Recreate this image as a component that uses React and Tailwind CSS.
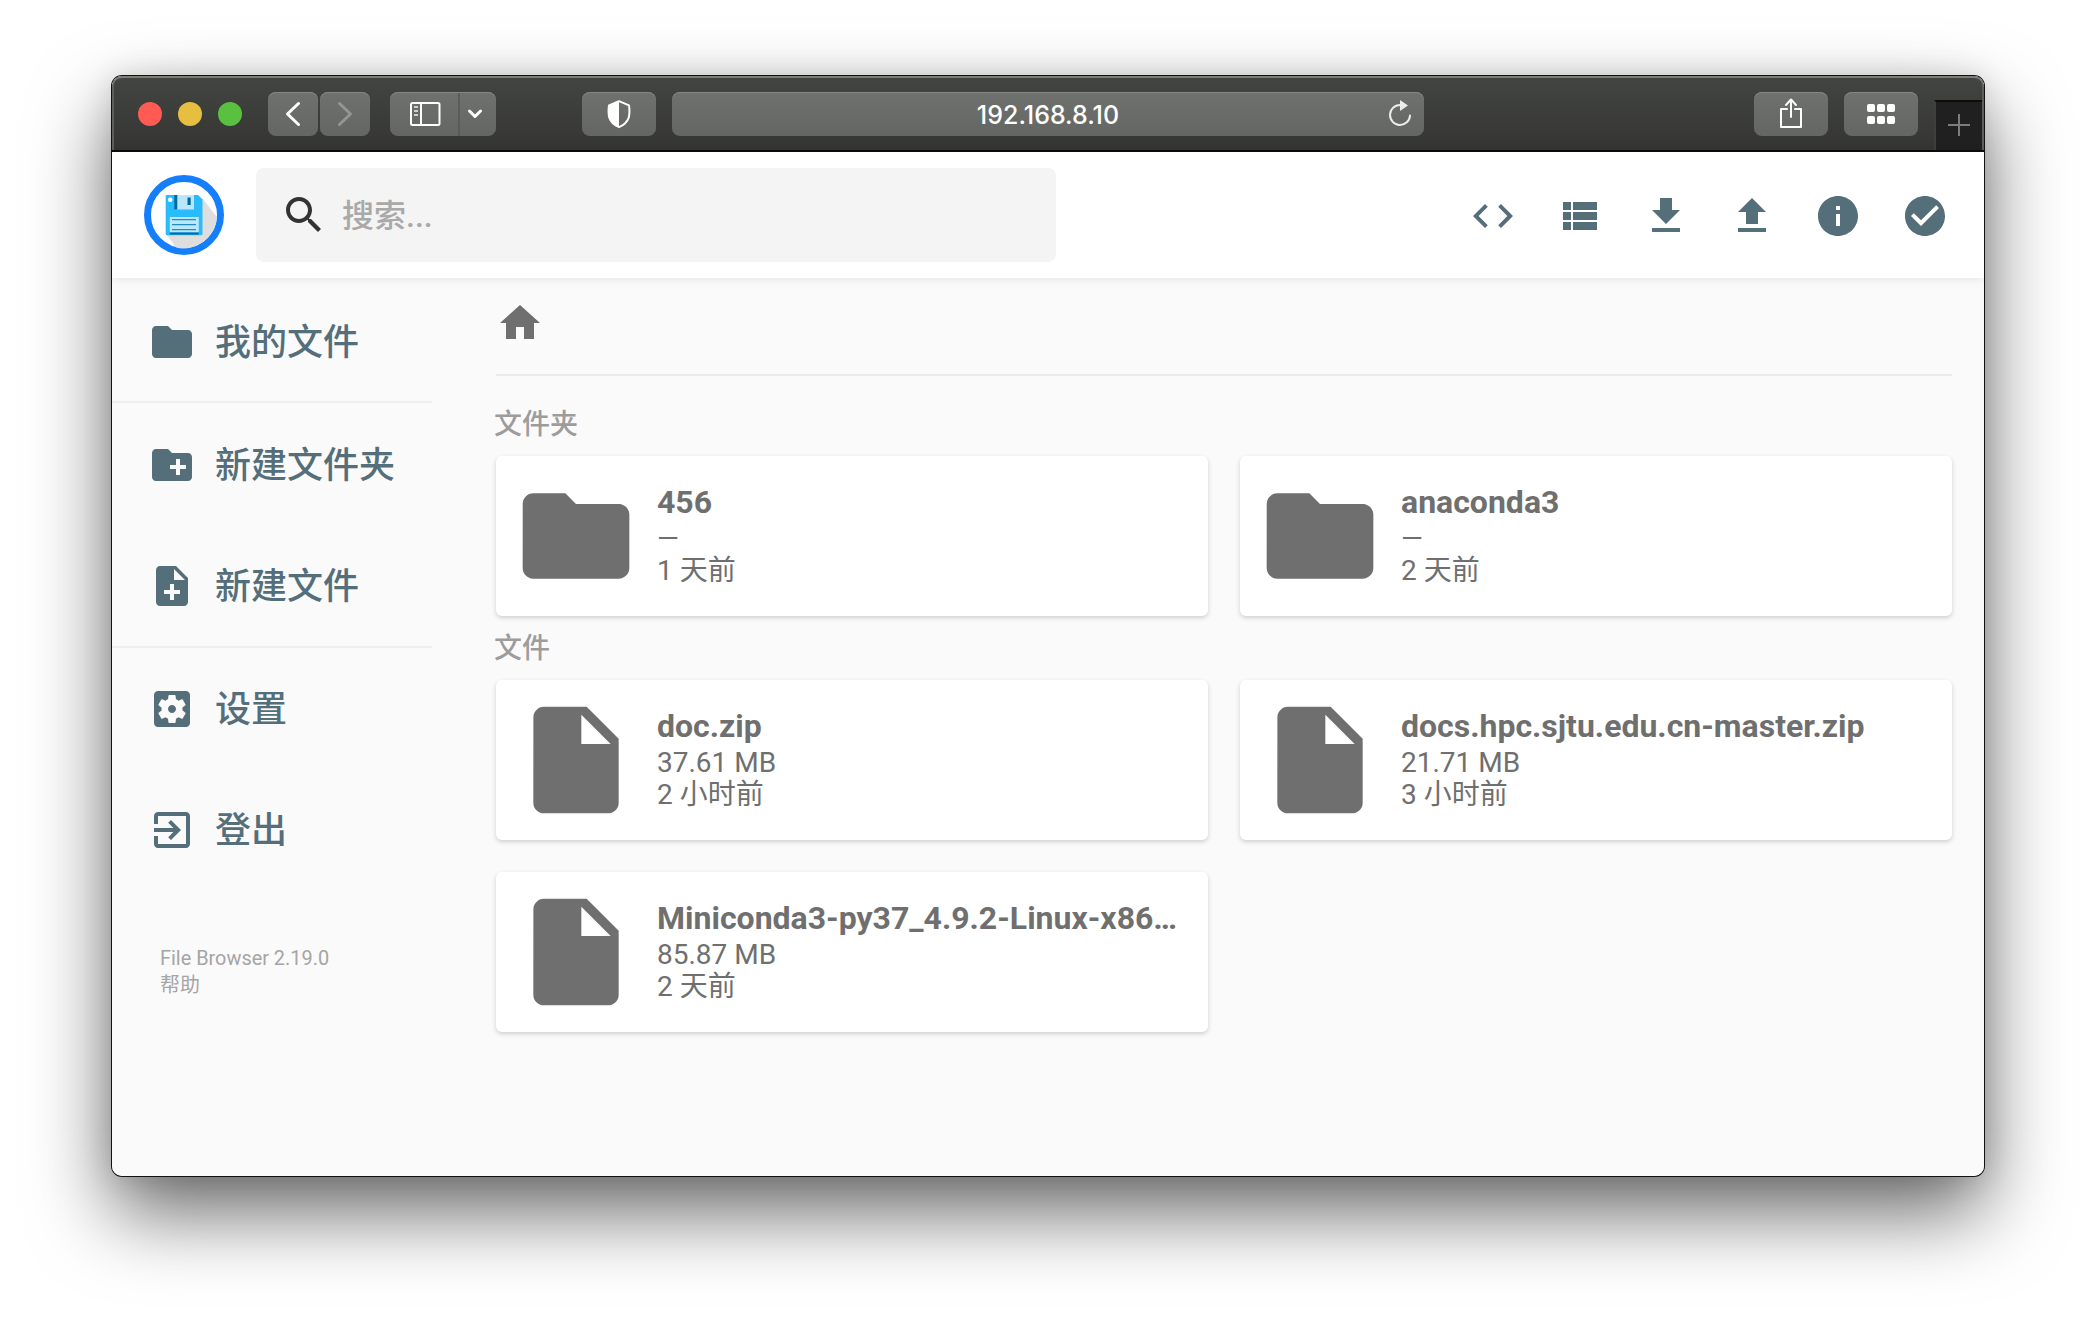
import React from "react";

const MD = {
  code: "M9.4 16.6L4.8 12l4.6-4.6L8 6l-6 6 6 6 1.4-1.4zm5.2 0l4.6-4.6-4.6-4.6L16 6l6 6-6 6-1.4-1.4z",
  list: "M4 14h4v-4H4v4zm0 5h4v-4H4v4zM4 9h4V5H4v4zm5 5h12v-4H9v4zm0 5h12v-4H9v4zM9 5v4h12V5H9z",
  download: "M19 9h-4V3H9v6H5l7 7 7-7zM5 18v2h14v-2H5z",
  upload: "M9 16h6v-6h4l-7-7-7 7h4zm-4 2h14v2H5z",
  info: "M12 2C6.48 2 2 6.48 2 12s4.48 10 10 10 10-4.48 10-10S17.52 2 12 2zm1 15h-2v-6h2v6zm0-8h-2V7h2v2z",
  check: "M12 2C6.48 2 2 6.48 2 12s4.48 10 10 10 10-4.48 10-10S17.52 2 12 2zm-2 15l-5-5 1.41-1.41L10 14.17l7.59-7.59L19 8l-9 9z",
  search: "M15.5 14h-.79l-.28-.27C15.41 12.59 16 11.11 16 9.5 16 5.91 13.09 3 9.5 3S3 5.91 3 9.5 5.91 16 9.5 16c1.61 0 3.09-.59 4.23-1.57l.27.28v.79l5 4.99L20.49 19l-4.99-5zm-6 0C7.01 14 5 11.99 5 9.5S7.01 5 9.5 5 14 7.01 14 9.5 11.99 14 9.5 14z",
  folder: "M10 4H4c-1.1 0-1.99.9-1.99 2L2 18c0 1.1.9 2 2 2h16c1.1 0 2-.9 2-2V8c0-1.1-.9-2-2-2h-8l-2-2z",
  newFolder: "M20 6h-8l-2-2H4c-1.11 0-1.99.89-1.99 2L2 18c0 1.11.89 2 2 2h16c1.11 0 2-.89 2-2V8c0-1.11-.89-2-2-2zm-1 8h-3v3h-2v-3h-3v-2h3V9h2v3h3v2z",
  newFile: "M14 2H6c-1.1 0-1.99.9-1.99 2L4 20c0 1.1.89 2 1.99 2H18c1.1 0 2-.9 2-2V8l-6-6zm2 14h-3v3h-2v-3H8v-2h3v-3h2v3h3v2zm-3-7V3.5L18.5 9H13z",
  settings: "M12 10c-1.1 0-2 .9-2 2s.9 2 2 2 2-.9 2-2-.9-2-2-2zm7-7H5c-1.11 0-2 .9-2 2v14c0 1.1.89 2 2 2h14c1.11 0 2-.9 2-2V5c0-1.1-.89-2-2-2zm-1.75 9c0 .23-.02.46-.05.68l1.48 1.16c.13.11.17.3.08.45l-1.4 2.42c-.09.15-.27.21-.43.15l-1.74-.7c-.36.28-.76.51-1.18.69l-.26 1.85c-.03.17-.18.3-.35.3h-2.8c-.17 0-.32-.13-.35-.29l-.26-1.85c-.43-.18-.82-.41-1.18-.69l-1.74.7c-.16.06-.34 0-.43-.15l-1.4-2.42c-.09-.15-.05-.34.08-.45l1.48-1.16c-.03-.23-.05-.46-.05-.69 0-.23.02-.46.05-.68l-1.48-1.16c-.13-.11-.17-.3-.08-.45l1.4-2.42c.09-.15.27-.21.43-.15l1.74.7c.36-.28.76-.51 1.18-.69l.26-1.85c.03-.17.18-.3.35-.3h2.8c.17 0 .32.13.35.29l.26 1.85c.43.18.82.41 1.18.69l1.74-.7c.16-.06.34 0 .43.15l1.4 2.42c.09.15.05.34-.08.45l-1.48 1.16c.03.23.05.46.05.69z",
  exit: "M10.09 15.59L11.5 17l5-5-5-5-1.41 1.41L12.67 11H3v2h9.67l-2.58 2.59zM19 3H5c-1.11 0-2 .9-2 2v4h2V5h14v14H5v-4H3v4c0 1.1.89 2 2 2h14c1.1 0 2-.9 2-2V5c0-1.1-.9-2-2-2z",
  home: "M10 20v-6h4v6h5v-8h3L12 3 2 12h3v8z",
  file: "M6 2c-1.1 0-1.99.9-1.99 2L4 20c0 1.1.89 2 1.99 2H18c1.1 0 2-.9 2-2V8l-6-6H6zm7 7V3.5L18.5 9H13z",
};

function Icon({ name, className = "size-12" }) {
  return (
    <svg viewBox="0 0 24 24" fill="currentColor" className={`shrink-0 ${className}`}>
      <path d={MD[name]} />
    </svg>
  );
}

function ToolButton({ className = "", children }) {
  return (
    <div className={`flex h-11 shrink-0 items-center justify-center rounded-[8px] bg-linear-to-b from-[#6f716e] to-[#646663] text-white shadow-[inset_0_1px_0_#858784] ${className}`}>
      {children}
    </div>
  );
}

function TitleBar() {
  return (
    <div className="flex h-[76px] items-start rounded-t-[10px] border-b-2 border-[#0c0c0c] bg-linear-to-b from-[#434541] to-[#353633] pt-4 shadow-[inset_0_2px_0_#7b7d7a,inset_2px_0_0_#5d5f5c,inset_-2px_0_0_#5d5f5c]">
      <div className="ml-[26px] flex h-11 gap-4 pt-[10px]">
        <span className="size-6 rounded-full bg-[#ff5b54]" />
        <span className="size-6 rounded-full bg-[#e6bf40]" />
        <span className="size-6 rounded-full bg-[#5ac140]" />
      </div>
      <ToolButton className="ml-[26px] w-[50px]">
        <svg viewBox="0 0 50 44" className="h-11 w-[50px]" fill="none" stroke="currentColor" strokeWidth="3" strokeLinecap="round" strokeLinejoin="round">
          <path d="M30.500 11.500L19.500 22l11 10.500" />
        </svg>
      </ToolButton>
      <ToolButton className="ml-[2px] w-[50px]">
        <svg viewBox="0 0 50 44" className="h-11 w-[50px]" fill="none" stroke="#949693" strokeWidth="3" strokeLinecap="round" strokeLinejoin="round">
          <path d="M19.500 11.500L30.500 22l-11 10.500" />
        </svg>
      </ToolButton>
      <ToolButton className="ml-5 w-[106px]">
        <svg viewBox="0 0 106 44" className="h-11 w-[106px]" fill="none" stroke="currentColor">
          <rect x="21" y="11" width="28.500" height="22" rx="1.500" strokeWidth="2" />
          <path d="M31 11v22" strokeWidth="2" />
          <path d="M24 15h4M24 19h4M24 23h4" strokeWidth="1.800" stroke="#cfd0ce" />
          <path d="M69 1v43" stroke="#555754" strokeWidth="1.500" />
          <path d="M79.500 19l5.500 5.500 5.500-5.500" strokeWidth="3" strokeLinecap="round" strokeLinejoin="round" />
        </svg>
      </ToolButton>
      <ToolButton className="ml-[86px] w-[74px]">
        <svg viewBox="0 0 74 44" className="h-11 w-[74px]">
          <path d="M37 9.200l10 4.200c.7 5 .6 9.300-.4 12.500-1.500 4.300-5.300 7.500-9.600 9.300-4.300-1.800-8.100-5-9.600-9.300-1-3.200-1.100-7.500-.4-12.500z" fill="none" stroke="white" strokeWidth="2" strokeLinejoin="round" />
          <path d="M37 9.200v26c-4.300-1.800-8.100-5-9.600-9.300-1-3.200-1.100-7.500-.4-12.500z" fill="white" />
        </svg>
      </ToolButton>
      <ToolButton className="ml-4 w-[752px] pl-10">
        <div className="flex-1 pt-[2px] text-center font-[Inter,sans-serif] text-[25px] leading-[42px] font-medium">192.168.8.10</div>
        <svg viewBox="0 0 32 44" className="mr-2 h-11 w-8" fill="none" stroke="#ececec" strokeWidth="2">
          <path d="M26 23.500a10 10 0 1 1-10-10.500" strokeLinecap="round" />
          <path d="M16 8l8 5.500-8 5.500z" fill="#ececec" stroke="none" />
        </svg>
      </ToolButton>
      <ToolButton className="ml-[330px] w-[74px]">
        <svg viewBox="0 0 74 44" className="h-11 w-[74px]" fill="none" stroke="currentColor" strokeWidth="2" strokeLinecap="round" strokeLinejoin="round">
          <path d="M33 17h-6v18h20V17h-6" />
          <path d="M37 25V8M32 13l5-5.500 5 5.500" />
        </svg>
      </ToolButton>
      <ToolButton className="ml-4 w-[74px]">
        <div className="grid grid-cols-3 gap-x-[2px] gap-y-1">
          {[0, 1, 2, 3, 4, 5].map((n) => (
            <span key={n} className="size-2 rounded-[2px] bg-white" />
          ))}
        </div>
      </ToolButton>
      <div className="mt-2 mr-[2px] ml-4 flex h-[50px] flex-1 items-center justify-center border-t-2 border-l-2 border-t-[#0c0c0c] border-l-[#3f403e] bg-[#1f201f] pb-[2px]">
        <svg viewBox="0 0 22 22" className="size-[22px]" stroke="#7c7c7c" strokeWidth="2">
          <path d="M11 0v22M0 11h22" />
        </svg>
      </div>
    </div>
  );
}

function Logo() {
  return (
    <svg viewBox="0 0 80 80" className="size-20 shrink-0">
      <circle cx="40" cy="40" r="36.500" fill="white" stroke="#147efb" strokeWidth="7" />
      <path d="M58 23L73 42A33.500 33.500 0 0 1 32 72.500L22 59z" fill="#dedede" />
      <path d="M23 20H54l4.500 4.500V59q0 1.300-1.300 1.300H23q-1.300 0-1.300-1.300V21.300Q21.700 20 23 20z" fill="#2abbfd" />
      <path d="M31 20h19v14.500H31z" fill="#b9e8fd" />
      <path d="M30.300 20h3v14.500h-3zM43.500 22.500h3.200v7.500h-3.200z" fill="#0268a0" />
      <path d="M25.800 42h29v15.500h-29z" fill="#b9e8fd" />
      <path d="M28 44.700h24M28 49.700h24M28 54.700h24" stroke="#0277a8" strokeWidth="1" />
      <path d="M25.800 57.500h29V59.500h-29z" fill="#0268a0" />
      <circle cx="26.200" cy="24.700" r="2.300" fill="white" />
    </svg>
  );
}

function Header() {
  return (
    <div className="relative flex h-[126px] items-center bg-white pr-4 pl-8 shadow-[0_0_10px_rgba(0,0,0,0.1)]">
      <Logo />
      <div className="ml-8 flex h-[94px] w-[800px] items-center rounded-lg bg-[#f4f4f4] pl-6 text-[#333]">
        <Icon name="search" />
        <span className="ml-[14px] pt-[2px] text-[32px] leading-none font-medium text-[#a9a9a9]">搜索...</span>
      </div>
      <div className="ml-auto flex text-[#546e7a]">
        {["code", "list", "download", "upload", "info", "check"].map((n) => (
          <div key={n} className="flex w-[86.400px] justify-center pt-[2px]">
            <Icon name={n} />
          </div>
        ))}
      </div>
    </div>
  );
}

function NavItem({ icon, label, className }) {
  return (
    <div className={`flex items-center pl-9 ${className}`}>
      <Icon name={icon} />
      <span className="ml-[19px] pt-px text-[36px] leading-none font-medium">{label}</span>
    </div>
  );
}

function Sidebar() {
  return (
    <div className="w-80 shrink-0 pt-[3px] text-[#546e7a]">
      <div className="border-b-2 border-[#eeeeee]">
        <NavItem icon="folder" label="我的文件" className="h-[120px] pt-[2px]" />
      </div>
      <div className="border-b-2 border-[#eeeeee]">
        <NavItem icon="newFolder" label="新建文件夹" className="h-[122px] pt-[2px]" />
        <NavItem icon="newFile" label="新建文件" className="h-[121px] pt-[1px]" />
      </div>
      <NavItem icon="settings" label="设置" className="h-[122px]" />
      <NavItem icon="exit" label="登出" className="h-[120px]" />
      <div className="mt-[55px] ml-12 text-[19.900px] leading-[27px] text-[#a5a5a5]">
        <div>File Browser 2.19.0</div>
        <div>帮助</div>
      </div>
    </div>
  );
}

function Card({ icon, name, size, time }) {
  return (
    <div className="flex h-40 items-center rounded-[6px] bg-white px-4 text-[#6f6f6f] shadow-[0_2px_6px_rgba(0,0,0,0.06),0_2px_4px_rgba(0,0,0,0.12)]">
      <Icon name={icon} className="size-32" />
      <div className="ml-[17px] whitespace-nowrap">
        <div className="mb-[3px] text-[32px] leading-[35px] font-bold">{name}</div>
        <div className="text-[28px] leading-8">{size}</div>
        <div className="text-[28px] leading-8">{time}</div>
      </div>
    </div>
  );
}

function Heading({ children, className }) {
  return <h2 className={`-ml-[2px] text-[28px] leading-8 font-medium text-[#9c9c9c] ${className}`}>{children}</h2>;
}

function Listing() {
  return (
    <div className="ml-16 w-[1456px]">
      <div className="flex h-[98px] items-start border-b-2 border-[#ebebeb] pt-[21px] text-[#6f6f6f]">
        <Icon name="home" />
      </div>
      <Heading className="mt-[33px]">文件夹</Heading>
      <div className="mt-[15px] grid grid-cols-2 gap-8">
        <Card icon="folder" name="456" size="—" time="1 天前" />
        <Card icon="folder" name="anaconda3" size="—" time="2 天前" />
      </div>
      <Heading className="mt-[17px]">文件</Heading>
      <div className="mt-[15px] grid grid-cols-2 gap-8">
        <Card icon="file" name="doc.zip" size="37.61 MB" time="2 小时前" />
        <Card icon="file" name="docs.hpc.sjtu.edu.cn-master.zip" size="21.71 MB" time="3 小时前" />
        <Card icon="file" name="Miniconda3-py37_4.9.2-Linux-x86…" size="85.87 MB" time="2 天前" />
      </div>
    </div>
  );
}

export default function App() {
  return (
    <div className="h-[1324px] w-[2096px] overflow-hidden bg-white px-28 pt-[76px] font-[Roboto,'Noto_Sans_CJK_SC',sans-serif]">
      <div className="h-[1100px] w-[1872px] rounded-[10px] shadow-[0_0_0_1px_#111,0_36px_80px_rgba(0,0,0,0.6),0_0_30px_rgba(0,0,0,0.12)]">
        <div className="h-full overflow-hidden rounded-[10px] bg-[#fafafa]">
          <TitleBar />
          <Header />
          <div className="flex">
            <Sidebar />
            <Listing />
          </div>
        </div>
      </div>
    </div>
  );
}
